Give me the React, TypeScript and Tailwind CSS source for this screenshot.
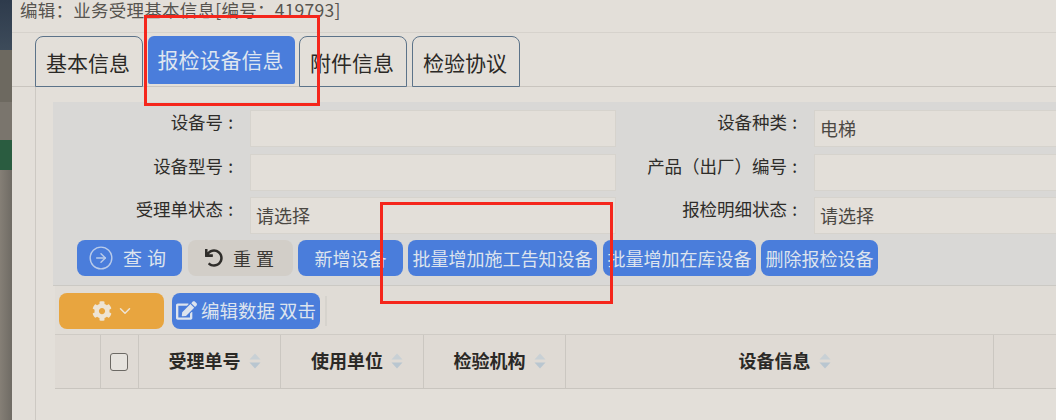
import React from "react";
import { FaCog, FaEdit, FaUndo } from "react-icons/fa";
import { ChevronDown, CircleArrowRight } from "lucide-react";

const font = { fontFamily: '"Noto Sans CJK SC", "Liberation Sans", sans-serif' };

function Tab({ label, active, cls }: { label: string; active?: boolean; cls?: string }) {
  if (active) {
    return (
      <div className={`${cls ?? ""} h-[48px] w-[147px] rounded-t-[6px] rounded-b-[2px] bg-[#4a7ddb] pr-[2px] text-[21px] leading-[46px] text-center whitespace-nowrap text-[#dfe6f0]`}>
        {label}
      </div>
    );
  }
  return (
    <div className={`${cls ?? ""} h-[51px] w-[108px] rounded-t-[8px] border border-[#5c7389] pr-[2px] text-[21px] leading-[50px] text-center whitespace-nowrap text-[#2b2926] bg-[#e3dfd9]`}>
      {label}
    </div>
  );
}

function Label({ text }: { text: string }) {
  return (
    <div className="pr-[17px] text-right text-[17.5px] leading-[24px] text-[#2e2c29]">
      {text}
      <span className="ml-[5px]">:</span>
    </div>
  );
}

function Field({ value, open }: { value?: string; open?: boolean }) {
  return (
    <div
      className={`h-[37px] border border-[#d6d3cd] bg-[#e3dfd9] pl-[5px] text-[18px] leading-[35px] text-[#4b4843] ${open ? "border-r-0" : ""}`}
    >
      {value}
    </div>
  );
}

function Btn({ children, cls }: { children: React.ReactNode; cls: string }) {
  return (
    <div className={`${cls} h-[36px] shrink-0 rounded-[8px] bg-[#4a7ddb] text-[18px] leading-[36px] text-center text-[#dde4ee] whitespace-nowrap`}>
      {children}
    </div>
  );
}

function Sort() {
  return (
    <svg width="12" height="18" viewBox="0 0 12 18" className="shrink-0">
      <path d="M6 1.5 L11.5 7.5 H0.5 Z" fill="#c8d0d5" />
      <path d="M6 16.5 L11.5 10.5 H0.5 Z" fill="#b9c6d0" />
    </svg>
  );
}

function Head({ text }: { text: string }) {
  return (
    <div className="flex items-center justify-center gap-[8px] border-r border-[#cbc7c1] pb-[2px] pl-[10px]">
      <span className="text-[18px] font-bold text-[#2b2926]">{text}</span>
      <Sort />
    </div>
  );
}

export default function App() {
  return (
    <div className="relative flex h-[420px] w-[1056px] overflow-hidden bg-[#e3dfd9]" style={font}>
      {/* desktop showing beside the window */}
      <div className="flex w-[12px] shrink-0 flex-col">
        <div className="h-[50px] bg-gradient-to-b from-[#2e3b4c] to-[#3d4b5a]" />
        <div className="h-[52px] bg-[#6d6960]" />
        <div className="h-[38px] bg-[#7a756d]" />
        <div className="h-[30px] bg-[#2a5c40]" />
        <div className="flex-1 bg-gradient-to-r from-[#857f76] to-[#6f6b64]" />
      </div>

      <div className="flex min-w-0 flex-1 flex-col">
        {/* title */}
        <div className="h-[33px] shrink-0 border-b border-[#d6d2cc] pl-[8px]">
          <div className="whitespace-nowrap text-[17.5px] leading-[20px] tracking-[0.25px] text-[#57544f]">
            编辑：业务受理基本信息[编号：419793]
          </div>
        </div>

        {/* tabs */}
        <div className="mt-[3px] flex h-[51px] shrink-0 items-start border-b border-[#c9c5bf] pl-[23px]">
          <Tab label="基本信息" />
          <Tab label="报检设备信息" active cls="ml-[5px]" />
          <Tab label="附件信息" cls="ml-[4px]" />
          <Tab label="检验协议" cls="ml-[5px]" />
        </div>

        {/* content */}
        <div className="ml-[23px] flex min-h-0 flex-1 flex-col border-l border-[#cdc9c3] pl-[17px] pt-[15px]">
          {/* search panel */}
          <div className="h-[184px] shrink-0 border-b border-[#cbc9c4] bg-[#d9d8d6] pt-[8px]">
            <div className="grid grid-cols-[197px_366px_198px_1fr] gap-y-[6.5px]">
              <Label text="设备号" />
              <Field />
              <Label text="设备种类" />
              <Field value="电梯" open />
              <Label text="设备型号" />
              <Field />
              <Label text="产品（出厂）编号" />
              <Field open />
              <Label text="受理单状态" />
              <Field value="请选择" />
              <Label text="报检明细状态" />
              <Field value="请选择" open />
            </div>
            <div className="mt-[6px] flex gap-[5px] pl-[24px]">
              <Btn cls="w-[105px]">
                <span className="flex h-full items-center justify-center gap-[9px] text-[19px]">
                  <CircleArrowRight size={26} strokeWidth={1.3} className="text-[#b9cbea]" />
                  <span className="tracking-[5px]">查询</span>
                </span>
              </Btn>
              <div className="ml-[1px] flex h-[36px] w-[105px] shrink-0 items-center justify-center gap-[10px] rounded-[8px] bg-[#d2cec8] pl-[3px] text-[18px] text-[#3b3935]">
                <FaUndo size={18} className="text-[#2f2d2a]" />
                <span className="tracking-[5px]">重置</span>
              </div>
              <Btn cls="w-[105px]">新增设备</Btn>
              <Btn cls="w-[189px]">批量增加施工告知设备</Btn>
              <Btn cls="ml-[1px] w-[153px]">批量增加在库设备</Btn>
              <Btn cls="w-[117px]">删除报检设备</Btn>
            </div>
          </div>

          {/* toolbar */}
          <div className="ml-[2px] flex h-[49px] shrink-0 items-center gap-[8px] border-b border-[#cfcbc5] bg-[#e0dcd6] pl-[4px] pt-[1px]">
            <div className="flex h-[36px] w-[105px] items-center justify-center gap-[4px] rounded-[8px] bg-[#e8a53f] pl-[3px] text-[#eee4d4]">
              <FaCog size={20} />
              <ChevronDown size={18} strokeWidth={2} />
            </div>
            <div className="flex h-[36px] w-[148px] items-center justify-center gap-[4px] rounded-[8px] bg-[#4a7ddb] text-[18.5px] text-[#dde4ee]">
              <FaEdit size={21} />
              <span className="whitespace-nowrap">编辑数据 双击</span>
            </div>
            <div className="ml-[-3px] h-[30px] w-[2px] bg-[#d6d3cd]" />
          </div>

          {/* table header */}
          <div className="ml-[2px] grid h-[54px] shrink-0 grid-cols-[46px_38px_142px_143px_142px_428px_1fr] border-b border-[#c9c5bf] bg-[#dfdad4]">
            <div className="border-r border-[#cbc7c1]" />
            <div className="flex items-center justify-center border-r border-[#cbc7c1] pr-[2px]">
              <div className="h-[18px] w-[18px] rounded-[3px] border-[1.5px] border-[#6c6964] bg-[#e6e3de]" />
            </div>
            <Head text="受理单号" />
            <Head text="使用单位" />
            <Head text="检验机构" />
            <Head text="设备信息" />
            <div />
          </div>
        </div>
      </div>

      {/* red annotation boxes */}
      <div className="absolute left-[144px] top-[15px] h-[91px] w-[176px] border-[3px] border-[#f5261c]" />
      <div className="absolute left-[380px] top-[202px] h-[102px] w-[233px] border-[3px] border-[#f5261c]" />
    </div>
  );
}
